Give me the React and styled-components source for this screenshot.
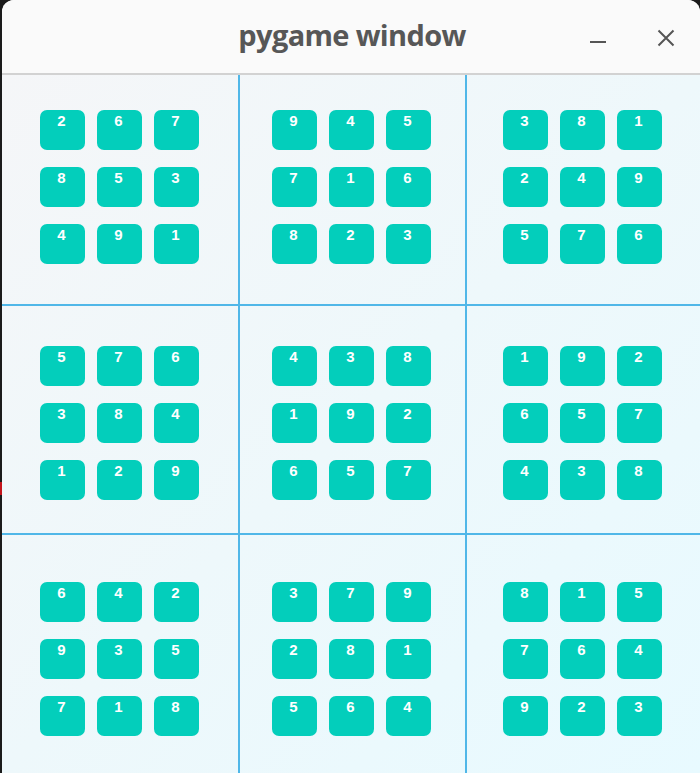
import React from 'react'
import styled, { createGlobalStyle } from 'styled-components'

const GlobalStyle = createGlobalStyle`
  html, body {
    margin: 0;
    padding: 0;
    background: #1b1b1b;
    overflow: hidden;
  }
`

const Desktop = styled.div`
  display: flex;
  width: 700px;
  height: 773px;
  background: #1b1b1b;
`

const EdgeStrip = styled.div`
  width: 2px;
  display: flex;
  flex-direction: column;
  padding-top: 482px;
`

const RedMark = styled.div`
  width: 2px;
  height: 13px;
  background: #c4141b;
`

const Window = styled.div`
  width: 698px;
  height: 773px;
  display: flex;
  flex-direction: column;
  border-radius: 12px 12px 0 0;
  overflow: hidden;
  background: #fafafa;
`

const TitleBar = styled.div`
  height: 73px;
  flex-shrink: 0;
  position: relative;
  display: flex;
  align-items: center;
  justify-content: center;
  background: #fafafa;
  border-bottom: 2px solid #d2d2d2;
`

const Title = styled.h1`
  margin: 0 0 4px 2px;
  font-family: "Open Sans", "DejaVu Sans", sans-serif;
  font-weight: 700;
  font-size: 29px;
  letter-spacing: -0.65px;
  color: #575757;
`

const Controls = styled.div`
  position: absolute;
  right: 18px;
  top: 22px;
  display: flex;
  align-items: center;
  gap: 36px;
`

const CtrlBtn = styled.button`
  border: none;
  background: none;
  padding: 0;
  width: 32px;
  height: 32px;
  display: flex;
  align-items: center;
  justify-content: center;
  cursor: pointer;
`

const Board = styled.div`
  flex: 1;
  display: grid;
  grid-template-columns: 238px 227px 1fr;
  grid-template-rows: 231px 229px 1fr;
  background: linear-gradient(135deg, #f5f6f8 0%, #eef8fb 50%, #e8faff 100%);
`

const Block = styled.div`
  box-sizing: border-box;
  padding-left: ${p => p.$px}px;
  padding-top: ${p => p.$py}px;
  border-right: ${p => (p.$lastCol ? 'none' : '2px solid #50b7e8')};
  border-bottom: ${p => (p.$lastRow ? 'none' : '2px solid #50b7e8')};
`

const TileGrid = styled.div`
  display: grid;
  grid-template-columns: repeat(3, 45px);
  grid-auto-rows: 40px;
  column-gap: 12px;
  row-gap: 17px;
`

const Tile = styled.div`
  background: #03cebb;
  border-radius: 7px;
  color: #ffffff;
  font-family: "Liberation Sans", Arial, sans-serif;
  font-weight: 700;
  font-size: 15px;
  line-height: 15px;
  text-align: center;
  padding: 3px 2px 0 0;
  box-sizing: border-box;
`

const blocks = [
  [2, 6, 7, 8, 5, 3, 4, 9, 1],
  [9, 4, 5, 7, 1, 6, 8, 2, 3],
  [3, 8, 1, 2, 4, 9, 5, 7, 6],
  [5, 7, 6, 3, 8, 4, 1, 2, 9],
  [4, 3, 8, 1, 9, 2, 6, 5, 7],
  [1, 9, 2, 6, 5, 7, 4, 3, 8],
  [6, 4, 2, 9, 3, 5, 7, 1, 8],
  [3, 7, 9, 2, 8, 1, 5, 6, 4],
  [8, 1, 5, 7, 6, 4, 9, 2, 3],
]

// offsets of each tile group inside its block
const colPad = [38, 32, 36]
const rowPad = [35, 40, 47]

function App() {
  return (
    <>
      <GlobalStyle />
      <Desktop>
        <EdgeStrip>
          <RedMark />
        </EdgeStrip>
        <Window>
          <TitleBar>
            <Title>pygame window</Title>
            <Controls>
              <CtrlBtn aria-label="minimize">
                <svg width="18" height="18" viewBox="0 0 18 18">
                  <line x1="1" y1="13" x2="17" y2="13" stroke="#555" strokeWidth="2" />
                </svg>
              </CtrlBtn>
              <CtrlBtn aria-label="close">
                <svg width="18" height="18" viewBox="0 0 18 18">
                  <path d="M1.5 1.5 L16.5 16.5 M16.5 1.5 L1.5 16.5" stroke="#555" strokeWidth="2" />
                </svg>
              </CtrlBtn>
            </Controls>
          </TitleBar>
          <Board>
            {blocks.map((nums, i) => {
              const r = Math.floor(i / 3)
              const c = i % 3
              return (
                <Block key={i} $px={colPad[c]} $py={rowPad[r]} $lastCol={c === 2} $lastRow={r === 2}>
                  <TileGrid>
                    {nums.map((n, j) => (
                      <Tile key={j}>{n}</Tile>
                    ))}
                  </TileGrid>
                </Block>
              )
            })}
          </Board>
        </Window>
      </Desktop>
    </>
  )
}

export default App
